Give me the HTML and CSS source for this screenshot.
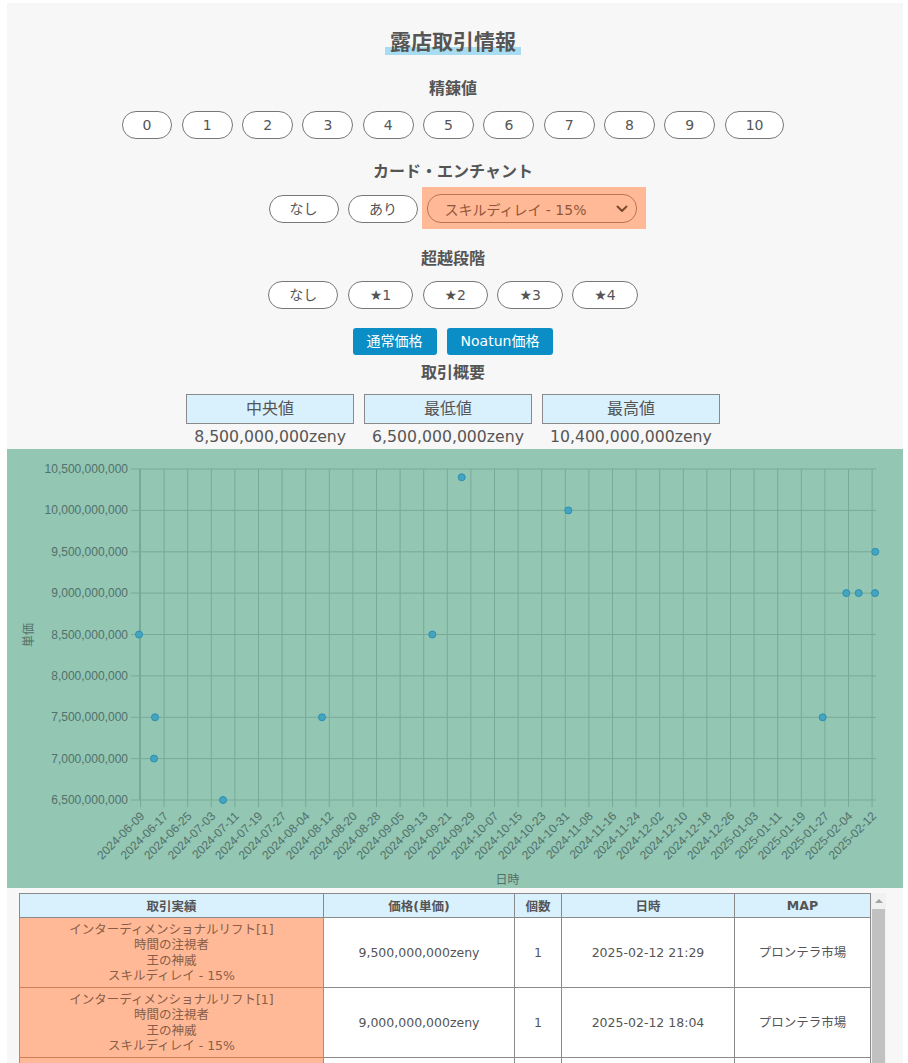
FILE: index.html
```html
<!DOCTYPE html>
<html lang="ja">
<head>
<meta charset="utf-8">
<title>露店取引情報</title>
<link rel="stylesheet" href="styles.css">
</head>
<body>
<div class="page">
  <div class="controls">
    <h1 class="title"><span>露店取引情報</span></h1>

    <h2 class="label label-first">精錬値</h2>
    <div class="btn-row">
      <button class="pill">0</button>
      <button class="pill">1</button>
      <button class="pill">2</button>
      <button class="pill">3</button>
      <button class="pill">4</button>
      <button class="pill">5</button>
      <button class="pill">6</button>
      <button class="pill">7</button>
      <button class="pill">8</button>
      <button class="pill">9</button>
      <button class="pill">10</button>
    </div>

    <h2 class="label label-card">カード・エンチャント</h2>
    <div class="btn-row btn-row-tight">
      <button class="pill">なし</button>
      <button class="pill">あり</button>
      <div class="select-wrap">
        <div class="select">
          <span>スキルディレイ - 15%</span>
          <svg class="chev" width="12" height="8" viewBox="0 0 12 8"><path d="M1.5 1.5 L6 6 L10.5 1.5" fill="none" stroke="#7a4a30" stroke-width="2" stroke-linecap="round" stroke-linejoin="round"/></svg>
        </div>
      </div>
    </div>

    <h2 class="label label-trans">超越段階</h2>
    <div class="btn-row btn-row-tight">
      <button class="pill">なし</button>
      <button class="pill star">★1</button>
      <button class="pill star">★2</button>
      <button class="pill star">★3</button>
      <button class="pill star">★4</button>
    </div>

    <div class="price-row">
      <button class="price-btn">通常価格</button>
      <button class="price-btn">Noatun価格</button>
    </div>

    <h2 class="label label-summary">取引概要</h2>
    <div class="summary">
      <div class="sum-item">
        <div class="sum-head">中央値</div>
        <div class="sum-value">8,500,000,000zeny</div>
      </div>
      <div class="sum-item">
        <div class="sum-head">最低値</div>
        <div class="sum-value">6,500,000,000zeny</div>
      </div>
      <div class="sum-item">
        <div class="sum-head">最高値</div>
        <div class="sum-value">10,400,000,000zeny</div>
      </div>
    </div>
  </div>

  <div class="chart">
    <svg class="chart-svg" width="896" height="439" viewBox="7 449 896 439">
      <g class="grid">
        <line x1="131" y1="469" x2="876" y2="469"/>
        <line x1="131" y1="510.4" x2="876" y2="510.4"/>
        <line x1="131" y1="551.8" x2="876" y2="551.8"/>
        <line x1="131" y1="593.1" x2="876" y2="593.1"/>
        <line x1="131" y1="634.5" x2="876" y2="634.5"/>
        <line x1="131" y1="675.9" x2="876" y2="675.9"/>
        <line x1="131" y1="717.3" x2="876" y2="717.3"/>
        <line x1="131" y1="758.6" x2="876" y2="758.6"/>
        <line x1="131" y1="800" x2="876" y2="800"/>
        <line x1="139.5" y1="469" x2="139.5" y2="800"/>
        <line x1="140.5" y1="469" x2="140.5" y2="807"/>
        <line x1="164.1" y1="469" x2="164.1" y2="807"/>
        <line x1="187.7" y1="469" x2="187.7" y2="807"/>
        <line x1="211.3" y1="469" x2="211.3" y2="807"/>
        <line x1="234.9" y1="469" x2="234.9" y2="807"/>
        <line x1="258.5" y1="469" x2="258.5" y2="807"/>
        <line x1="282.1" y1="469" x2="282.1" y2="807"/>
        <line x1="305.7" y1="469" x2="305.7" y2="807"/>
        <line x1="329.3" y1="469" x2="329.3" y2="807"/>
        <line x1="352.9" y1="469" x2="352.9" y2="807"/>
        <line x1="376.5" y1="469" x2="376.5" y2="807"/>
        <line x1="400.1" y1="469" x2="400.1" y2="807"/>
        <line x1="423.7" y1="469" x2="423.7" y2="807"/>
        <line x1="447.3" y1="469" x2="447.3" y2="807"/>
        <line x1="470.9" y1="469" x2="470.9" y2="807"/>
        <line x1="494.5" y1="469" x2="494.5" y2="807"/>
        <line x1="518.1" y1="469" x2="518.1" y2="807"/>
        <line x1="541.7" y1="469" x2="541.7" y2="807"/>
        <line x1="565.3" y1="469" x2="565.3" y2="807"/>
        <line x1="588.9" y1="469" x2="588.9" y2="807"/>
        <line x1="612.5" y1="469" x2="612.5" y2="807"/>
        <line x1="636.1" y1="469" x2="636.1" y2="807"/>
        <line x1="659.7" y1="469" x2="659.7" y2="807"/>
        <line x1="683.3" y1="469" x2="683.3" y2="807"/>
        <line x1="706.9" y1="469" x2="706.9" y2="807"/>
        <line x1="730.5" y1="469" x2="730.5" y2="807"/>
        <line x1="754.1" y1="469" x2="754.1" y2="807"/>
        <line x1="777.7" y1="469" x2="777.7" y2="807"/>
        <line x1="801.3" y1="469" x2="801.3" y2="807"/>
        <line x1="824.9" y1="469" x2="824.9" y2="807"/>
        <line x1="848.5" y1="469" x2="848.5" y2="807"/>
        <line x1="872.1" y1="469" x2="872.1" y2="807"/>
      </g>
      <g class="ylabels">
        <text x="128" y="469">10,500,000,000</text>
        <text x="128" y="510.4">10,000,000,000</text>
        <text x="128" y="551.8">9,500,000,000</text>
        <text x="128" y="593.1">9,000,000,000</text>
        <text x="128" y="634.5">8,500,000,000</text>
        <text x="128" y="675.9">8,000,000,000</text>
        <text x="128" y="717.3">7,500,000,000</text>
        <text x="128" y="758.6">7,000,000,000</text>
        <text x="128" y="800">6,500,000,000</text>
      </g>
      <g class="xlabels">
        <text transform="translate(142.5 814) rotate(-45)">2024-06-09</text>
        <text transform="translate(166.1 814) rotate(-45)">2024-06-17</text>
        <text transform="translate(189.7 814) rotate(-45)">2024-06-25</text>
        <text transform="translate(213.3 814) rotate(-45)">2024-07-03</text>
        <text transform="translate(236.9 814) rotate(-45)">2024-07-11</text>
        <text transform="translate(260.5 814) rotate(-45)">2024-07-19</text>
        <text transform="translate(284.1 814) rotate(-45)">2024-07-27</text>
        <text transform="translate(307.7 814) rotate(-45)">2024-08-04</text>
        <text transform="translate(331.3 814) rotate(-45)">2024-08-12</text>
        <text transform="translate(354.9 814) rotate(-45)">2024-08-20</text>
        <text transform="translate(378.5 814) rotate(-45)">2024-08-28</text>
        <text transform="translate(402.1 814) rotate(-45)">2024-09-05</text>
        <text transform="translate(425.7 814) rotate(-45)">2024-09-13</text>
        <text transform="translate(449.3 814) rotate(-45)">2024-09-21</text>
        <text transform="translate(472.9 814) rotate(-45)">2024-09-29</text>
        <text transform="translate(496.5 814) rotate(-45)">2024-10-07</text>
        <text transform="translate(520.1 814) rotate(-45)">2024-10-15</text>
        <text transform="translate(543.7 814) rotate(-45)">2024-10-23</text>
        <text transform="translate(567.3 814) rotate(-45)">2024-10-31</text>
        <text transform="translate(590.9 814) rotate(-45)">2024-11-08</text>
        <text transform="translate(614.5 814) rotate(-45)">2024-11-16</text>
        <text transform="translate(638.1 814) rotate(-45)">2024-11-24</text>
        <text transform="translate(661.7 814) rotate(-45)">2024-12-02</text>
        <text transform="translate(685.3 814) rotate(-45)">2024-12-10</text>
        <text transform="translate(708.9 814) rotate(-45)">2024-12-18</text>
        <text transform="translate(732.5 814) rotate(-45)">2024-12-26</text>
        <text transform="translate(756.1 814) rotate(-45)">2025-01-03</text>
        <text transform="translate(779.7 814) rotate(-45)">2025-01-11</text>
        <text transform="translate(803.3 814) rotate(-45)">2025-01-19</text>
        <text transform="translate(826.9 814) rotate(-45)">2025-01-27</text>
        <text transform="translate(850.5 814) rotate(-45)">2025-02-04</text>
        <text transform="translate(874.1 814) rotate(-45)">2025-02-12</text>
      </g>
      <text class="axis-title" x="507.5" y="880">日時</text>
      <text class="axis-title" transform="translate(29 635) rotate(-90)">単価</text>
      <g class="points">
        <circle cx="139" cy="634.5" r="3.5"/>
        <circle cx="155" cy="717.3" r="3.5"/>
        <circle cx="154" cy="758.6" r="3.5"/>
        <circle cx="223" cy="800" r="3.5"/>
        <circle cx="322" cy="717.3" r="3.5"/>
        <circle cx="432.3" cy="634.5" r="3.5"/>
        <circle cx="461.7" cy="477.3" r="3.5"/>
        <circle cx="568.3" cy="510.4" r="3.5"/>
        <circle cx="822.7" cy="717.3" r="3.5"/>
        <circle cx="846.3" cy="593.1" r="3.5"/>
        <circle cx="858.7" cy="593.1" r="3.5"/>
        <circle cx="875" cy="593.1" r="3.5"/>
        <circle cx="875.3" cy="551.8" r="3.5"/>
      </g>
    </svg>
  </div>

  <div class="table-wrap">
    <div class="table-view">
      <table class="deals">
        <colgroup>
          <col class="c-item"><col class="c-price"><col class="c-qty"><col class="c-date"><col class="c-map">
        </colgroup>
        <thead>
          <tr><th>取引実績</th><th>価格(単価)</th><th>個数</th><th>日時</th><th>MAP</th></tr>
        </thead>
        <tbody>
          <tr>
            <td class="item">インターディメンショナルリフト[1]<br>時間の注視者<br>王の神威<br>スキルディレイ - 15%</td>
            <td>9,500,000,000zeny</td><td>1</td><td>2025-02-12 21:29</td><td>プロンテラ市場</td>
          </tr>
          <tr>
            <td class="item">インターディメンショナルリフト[1]<br>時間の注視者<br>王の神威<br>スキルディレイ - 15%</td>
            <td>9,000,000,000zeny</td><td>1</td><td>2025-02-12 18:04</td><td>プロンテラ市場</td>
          </tr>
          <tr>
            <td class="item">インターディメンショナルリフト[1]<br>時間の注視者<br>王の神威<br>スキルディレイ - 15%</td>
            <td>9,000,000,000zeny</td><td>1</td><td>2025-02-08 13:42</td><td>プロンテラ市場</td>
          </tr>
          <tr>
            <td class="item">インターディメンショナルリフト[1]<br>時間の注視者<br>王の神威<br>スキルディレイ - 15%</td>
            <td>9,000,000,000zeny</td><td>1</td><td>2025-02-04 20:15</td><td>プロンテラ市場</td>
          </tr>
          <tr>
            <td class="item">インターディメンショナルリフト[1]<br>時間の注視者<br>王の神威<br>スキルディレイ - 15%</td>
            <td>7,500,000,000zeny</td><td>1</td><td>2025-01-25 22:08</td><td>プロンテラ市場</td>
          </tr>
          <tr>
            <td class="item">インターディメンショナルリフト[1]<br>時間の注視者<br>王の神威<br>スキルディレイ - 15%</td>
            <td>10,000,000,000zeny</td><td>1</td><td>2024-11-01 19:33</td><td>プロンテラ市場</td>
          </tr>
        </tbody>
      </table>
    </div>
    <div class="vscroll" aria-hidden="true">
      <div class="vscroll-up"></div>
      <div class="vscroll-thumb"></div>
    </div>
  </div>
</div>
</body>
</html>
```

FILE: styles.css
```css
body {
  margin: 0;
  background: #ffffff;
  font-family: "DejaVu Sans", "Noto Sans CJK JP", sans-serif;
  color: #555555;
}

.page {
  margin: 3px 5px 0 7px;
  background: #f7f7f7;
  padding-bottom: 40px;
}

.controls {
  padding: 26px 4px 0 0;
  display: flex;
  flex-direction: column;
  align-items: center;
}

.title {
  margin: 0;
  font-size: 21px;
  font-weight: bold;
  line-height: 26px;
  color: #555555;
}

.title span {
  display: inline-block;
  padding: 0 5px;
  background: linear-gradient(to bottom, transparent 69%, #a8dcf0 69%);
}

.label {
  margin: 0;
  font-size: 16px;
  font-weight: bold;
  line-height: 20px;
  color: #555555;
}

.label-first { margin-top: 24px; }
.label-card { margin-top: 23px; }
.label-trans { margin-top: 26px; }
.label-summary { margin-top: 8px; }

.btn-row {
  display: flex;
  justify-content: center;
  align-items: center;
  gap: 9.4px;
  margin-top: 12px;
}

.btn-row-tight { margin-top: 12px; }

.pill {
  box-sizing: border-box;
  height: 28px;
  padding: 0 20px;
  border: 1px solid #777777;
  border-radius: 15px;
  background: #ffffff;
  color: #555555;
  font-family: inherit;
  font-size: 14px;
  line-height: 26px;
}

.pill.star { padding: 0 21px; }

.select-wrap {
  margin: -7px -9px -6px -5px;
  padding: 7px 9px 6px 5px;
  background: #ffb996;
}

.select {
  box-sizing: border-box;
  width: 210px;
  height: 29px;
  border: 1px solid #b87452;
  border-radius: 14px;
  padding: 0 8px 0 16px;
  display: flex;
  align-items: center;
  justify-content: space-between;
  font-size: 14px;
  color: #91563a;
}

.chev { display: block; }

.price-row {
  display: flex;
  gap: 10px;
  margin-top: 19px;
}

.price-btn {
  box-sizing: border-box;
  height: 27px;
  padding: 0 14px;
  border: 0;
  border-radius: 3px;
  background: #0b8ec5;
  color: #ffffff;
  font-family: inherit;
  font-size: 14px;
  line-height: 27px;
}

.summary {
  display: flex;
  gap: 10px;
  margin-top: 11px;
}

.sum-item {
  display: flex;
  flex-direction: column;
}

.sum-head {
  box-sizing: border-box;
  height: 30px;
  border: 1px solid #8a8a8a;
  background: #d9f1fd;
  text-align: center;
  font-size: 16px;
  line-height: 28px;
}

.sum-value {
  margin-top: 3px;
  padding: 0 8px;
  font-size: 15.7px;
  line-height: 20px;
  text-align: center;
  white-space: nowrap;
}

.chart {
  margin-top: 2px;
  height: 439px;
  background: #93c6b3;
}

.chart-svg { display: block; }

.grid line {
  stroke: #79aa98;
  stroke-width: 1;
}

.ylabels text {
  font-family: "Liberation Sans", Arial, sans-serif;
  font-size: 12px;
  fill: #52706a;
  text-anchor: end;
  dominant-baseline: central;
}

.xlabels text {
  font-family: "Liberation Sans", Arial, sans-serif;
  font-size: 12px;
  fill: #52706a;
  text-anchor: end;
  dominant-baseline: central;
}

.axis-title {
  font-family: "Liberation Sans", "Noto Sans CJK JP", sans-serif;
  font-size: 12px;
  fill: #52706a;
  text-anchor: middle;
  dominant-baseline: central;
}

.points circle {
  fill: #45a4c0;
  stroke: #2b90b2;
  stroke-width: 1;
}

.table-wrap {
  margin: 5px 17px 0 12px;
  height: 480px;
  display: flex;
}

.table-view {
  flex: 1;
  overflow: hidden;
}

.vscroll {
  width: 15px;
  flex: none;
  background: #f1f1f1;
  display: flex;
  flex-direction: column;
  align-items: center;
}

.vscroll-up {
  width: 0;
  height: 0;
  margin: 6px 0 6px;
  border-left: 4px solid transparent;
  border-right: 4px solid transparent;
  border-bottom: 4px solid #a3a3a3;
}

.vscroll-thumb {
  width: 13px;
  height: 300px;
  background: #c1c1c1;
}

.deals {
  border-collapse: collapse;
  table-layout: fixed;
  width: 851px;
  background: #ffffff;
  font-size: 12.5px;
  color: #555555;
}

.c-item { width: 304px; }
.c-price { width: 191px; }
.c-qty { width: 47px; }
.c-date { width: 173px; }
.c-map { width: 136px; }

.deals th {
  height: 23px;
  padding: 0;
  border: 1px solid #8a8a8a;
  background: #d9f1fd;
  font-weight: bold;
  font-size: 12.5px;
  color: #555555;
}

.deals td {
  height: 69px;
  padding: 0;
  border: 1px solid #8a8a8a;
  text-align: center;
  line-height: 15.3px;
}

.deals td.item {
  background: #ffb996;
  border-color: #d27f58;
  color: #8a5d48;
}
```
